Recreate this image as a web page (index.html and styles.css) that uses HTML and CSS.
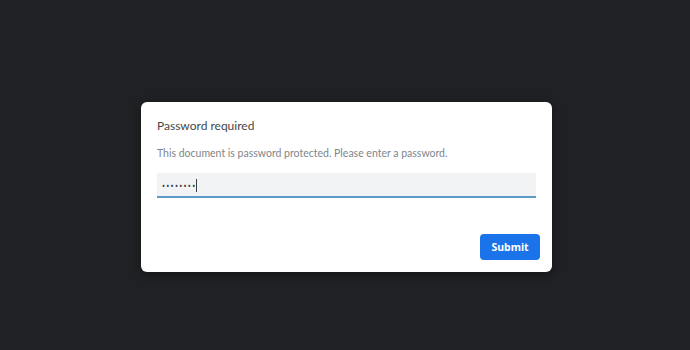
FILE: index.html
```html
<!DOCTYPE html>
<html>
<head>
<meta charset="utf-8">
<link rel="stylesheet" href="styles.css">
</head>
<body>
<div class="overlay">
  <div class="dialog">
    <div class="title">Password required</div>
    <div class="desc">This document is password protected. Please enter a password.</div>
    <div class="field"><span class="dots">••••••••</span><span class="caret"></span></div>
    <div class="actions"><button class="submit">Submit</button></div>
  </div>
</div>
</body>
</html>
```
FILE: styles.css
```css
html, body {
  margin: 0;
  padding: 0;
  background: #202124;
  height: 100%;
}
.overlay {
  height: 350px;
  display: flex;
  align-items: flex-start;
  justify-content: flex-start;
  padding: 102px 0 0 141px;
  box-sizing: border-box;
}
.dialog {
  width: 411px;
  height: 170px;
  box-sizing: border-box;
  background: #fff;
  border-radius: 6px;
  box-shadow: 0 2px 8px rgba(0,0,0,0.4);
  padding: 16px 16px 12px 16px;
  display: flex;
  flex-direction: column;
  font-family: Lato, "Noto Sans", sans-serif;
}
.title {
  font-size: 12px;
  color: #444746;
  line-height: 16px;
}
.desc {
  margin-top: 12px;
  font-size: 10.5px;
  color: #80868b;
  line-height: 14px;
}
.field {
  margin-top: 13px;
  width: 379px;
  height: 25px;
  box-sizing: border-box;
  background: #f1f3f4;
  border-bottom: 2px solid #5a9cc6;
  display: flex;
  align-items: center;
  padding: 2px 0 0 5px;
}
.dots {
  font-family: "Noto Sans", sans-serif;
  font-size: 8px;
  letter-spacing: 1.3px;
  color: #3c4043;
}
.caret {
  width: 1px;
  height: 13px;
  background: #3c4043;
}
.actions {
  margin-top: auto;
  display: flex;
  justify-content: flex-end;
  margin-right: -4px;
}
.submit {
  width: 60px;
  height: 26px;
  border: none;
  border-radius: 4px;
  background: #1a73e8;
  color: #fff;
  font-family: "Noto Sans", "Open Sans", sans-serif;
  font-weight: 700;
  font-size: 10.5px;
  padding: 0;
}
```
